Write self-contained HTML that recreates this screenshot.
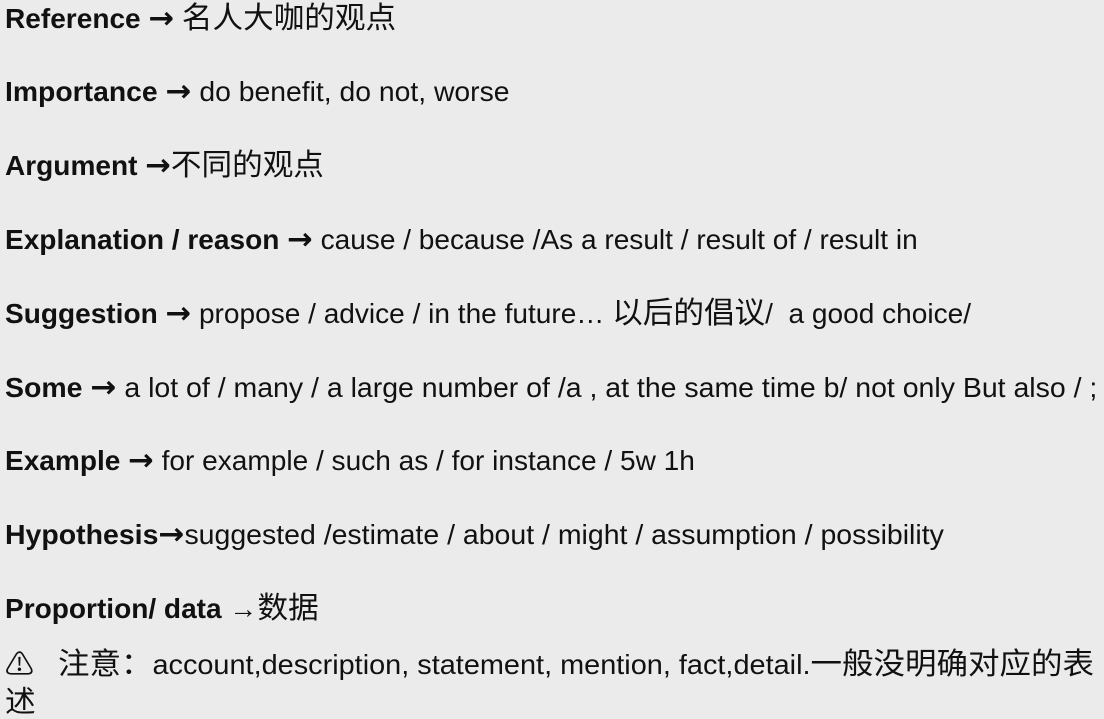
<!DOCTYPE html>
<html><head><meta charset="utf-8"><style>
html,body{margin:0;padding:0}
body{width:1104px;height:719px;background:#ebebeb;overflow:hidden;position:relative;font-family:"Liberation Sans","Noto Sans CJK SC",sans-serif;color:#111}
.l{position:absolute;left:5px;white-space:nowrap;font-size:27.5px;line-height:32px;transform-origin:left center;transform:scaleX(1.02)}
b{font-weight:bold}
.c{font-size:30px}
.a{font-family:"DejaVu Sans",sans-serif;font-weight:bold;font-size:30px;line-height:20px}
</style></head><body>
<div class="l" style="top:3px"><b>Reference <span class="a">→</span></b> <span class="c">名人大咖的观点</span></div>
<div class="l" style="top:76px;transform:scaleX(1.03)"><b>Importance <span class="a">→</span></b> do benefit, do not, worse</div>
<div class="l" style="top:150px"><b>Argument <span class="a">→</span></b><span class="c">不同的观点</span></div>
<div class="l" style="top:224px"><b>Explanation / reason <span class="a">→</span></b> cause / because /As a result / result of / result in</div>
<div class="l" style="top:298px"><b>Suggestion <span class="a">→</span></b> propose / advice / in the future… <span class="c">以后的倡议</span>/&nbsp; a good choice/</div>
<div class="l" style="top:372px;transform:scaleX(1.035)"><b>Some <span class="a">→</span></b> a lot of / many / a large number of /a , at the same time b/ not only But also / ;</div>
<div class="l" style="top:445px"><b>Example <span class="a">→</span></b> for example / such as / for instance / 5w 1h</div>
<div class="l" style="top:519px;transform:scaleX(1.035)"><b>Hypothesis<span class="a">→</span></b>suggested /estimate / about / might / assumption / possibility</div>
<div class="l" style="top:593px"><b>Proportion/ data</b> →<span class="c">数据</span></div>
<div class="l" style="top:649px;transform:scaleX(1.05)">⚠&nbsp;&nbsp; <span class="c">注意：</span>account,description, statement, mention, fact,detail.<span class="c">一般没明确对应的表</span></div>
<div class="l" style="top:687px"><span class="c">述</span></div>
</body></html>
